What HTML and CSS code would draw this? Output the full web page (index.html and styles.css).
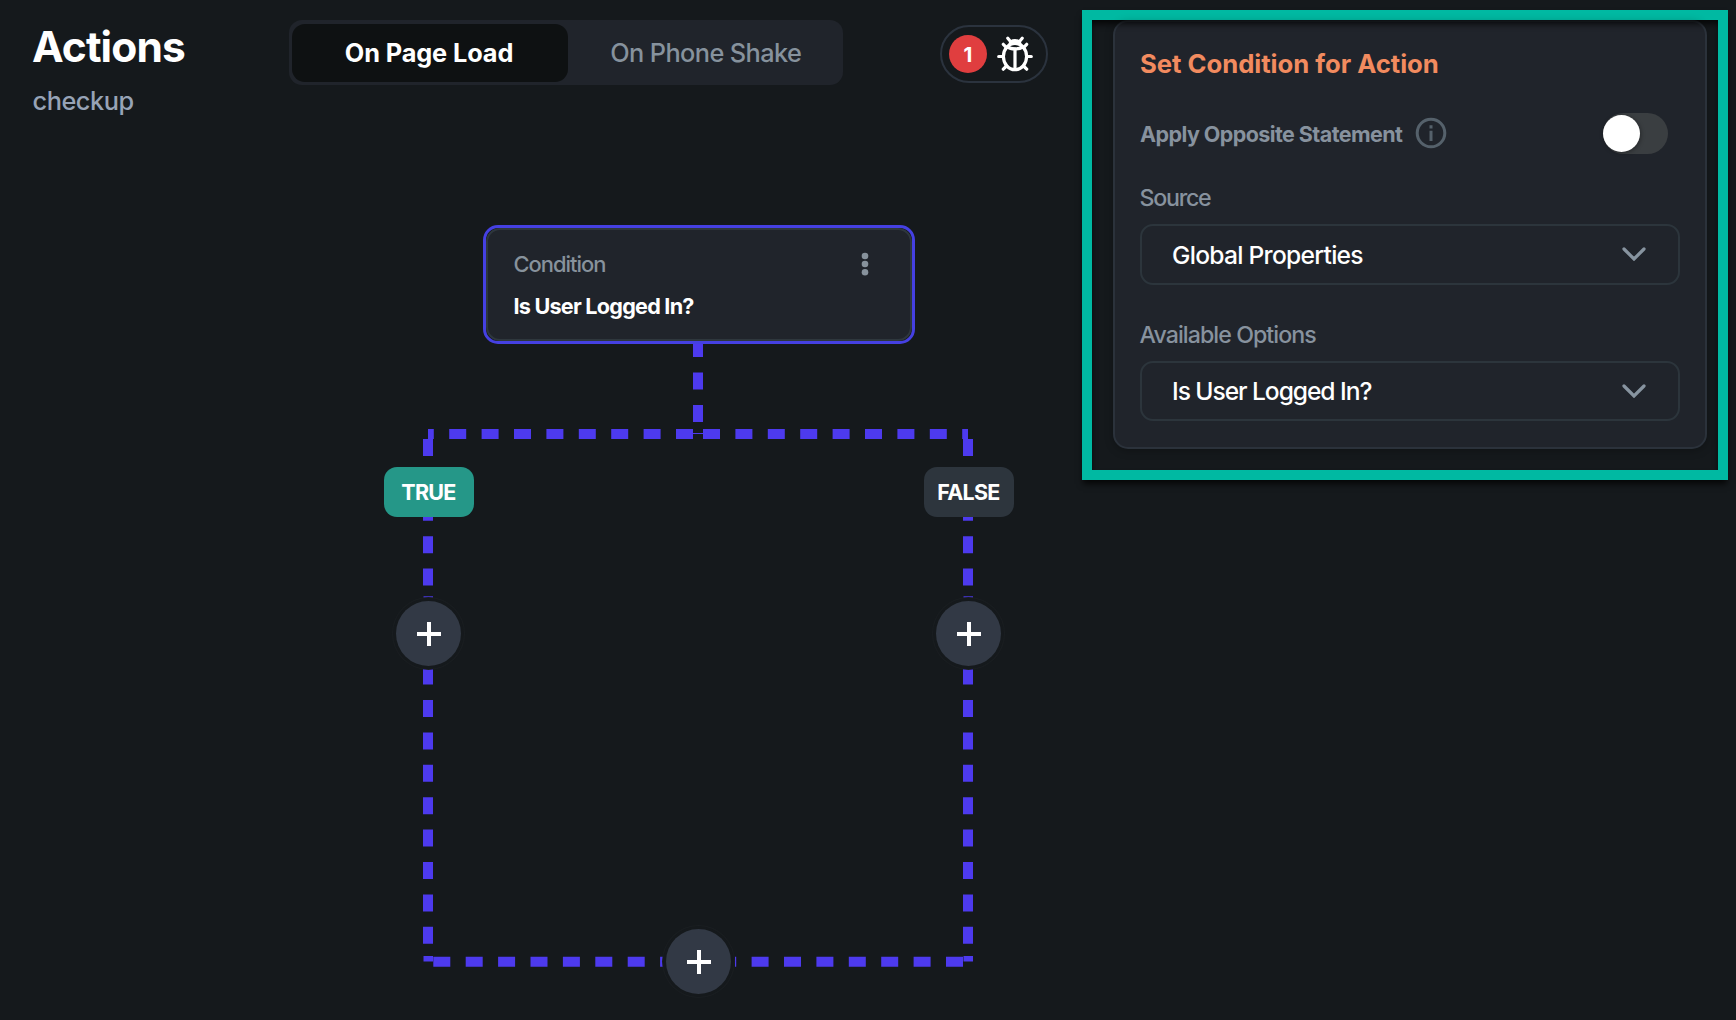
FILE: index.html
```html
<!DOCTYPE html>
<html lang="en">
<head>
<meta charset="utf-8">
<title>Actions</title>
<link rel="stylesheet" href="styles.css">
</head>
<body>
<div class="app">
  <main class="workspace">
    <header class="topbar">
      <div class="heading">
        <h1 class="page-title">Actions</h1>
        <p class="page-name">checkup</p>
      </div>
      <nav class="tabs">
        <button class="tab tab-active">On Page Load</button>
        <button class="tab">On Phone Shake</button>
      </nav>
      <button class="issues" aria-label="Issues">
        <span class="issue-count">1</span>
        <svg class="bug" viewBox="0 0 36 36" fill="none" stroke="#fff" stroke-width="3.2" stroke-linecap="round">
          <ellipse cx="18" cy="20.5" rx="11.6" ry="13.2"/>
          <path d="M18 12.5V33.5M11 11C13.5 13.5 22.5 13.5 25 11M12.8 8.6C13.5 5.5 15.5 4.6 18 4.6S22.5 5.5 23.2 8.6M10.8 2.3L13.3 5.2M25.2 2.3L22.7 5.2M1.7 20.5H6M30 20.5H34.3M6.3 8.3L9.5 11.6M29.7 8.3L26.5 11.6M6.3 33.2L9.5 30M29.7 33.2L26.5 30"/>
        </svg>
      </button>
    </header>

    <section class="canvas">
      <svg class="wires" viewBox="0 140 1082 880" fill="#4d3aee">
        <g class="dashes">
          <path d="M698 340V357"/>
          <path d="M698 372.5V434"/>
          <path d="M693 434H428"/>
          <path d="M703 434H968"/>
          <path d="M428 439V585.5"/>
          <path d="M968 439V585.5"/>
          <path d="M428 667.6V944"/>
          <path d="M968 667.6V944"/>
          <path d="M433.3 961.7H663"/>
          <path d="M963 961.7H735"/>
        </g>
        <path d="M693 433h10v1h-10z"/>
        <path d="M423.5 596h9.5v2h-9.5zM963.5 596h9.5v2h-9.5z" opacity=".7"/>
        <path d="M423.5 956h9.5v5.5h-9.5zM963.5 956h9.5v5.5h-9.5z"/>
      </svg>

      <article class="node">
        <div class="node-body">
          <div class="node-head">
            <span class="node-kind">Condition</span>
            <svg class="dots" viewBox="0 0 8 24" fill="#87929c"><circle cx="4" cy="4" r="3.3"/><circle cx="4" cy="12" r="3.3"/><circle cx="4" cy="20.2" r="3.3"/></svg>
          </div>
          <div class="node-name">Is User Logged In?</div>
        </div>
      </article>

      <span class="branch branch-true">TRUE</span>
      <span class="branch branch-false">FALSE</span>

      <button class="add add-true" aria-label="Add action"><svg viewBox="0 0 26 26"><path d="M1 13H25M13 1V25"/></svg></button>
      <button class="add add-false" aria-label="Add action"><svg viewBox="0 0 26 26"><path d="M1 13H25M13 1V25"/></svg></button>
      <button class="add add-end" aria-label="Add action"><svg viewBox="0 0 26 26"><path d="M1 13H25M13 1V25"/></svg></button>
    </section>
  </main>

  <aside class="highlight">
    <section class="panel">
      <h2 class="panel-title">Set Condition for Action</h2>
      <div class="toggle-row">
        <span class="toggle-label">Apply Opposite Statement</span>
        <svg class="info" viewBox="0 0 32 32" fill="none" stroke="#55616b" stroke-width="3"><circle cx="16" cy="16" r="13.8"/><path d="M16 13.8V24M16 8.3V11.5"/></svg>
        <span class="switch"><span class="knob"></span></span>
      </div>
      <div class="label">Source</div>
      <div class="select">
        <span class="select-global">Global Properties</span>
        <svg class="chevron" viewBox="0 0 24 14"><path d="M2 2L12 12L22 2"/></svg>
      </div>
      <div class="label label-options">Available Options</div>
      <div class="select select-short">
        <span class="select-user">Is User Logged In?</span>
        <svg class="chevron" viewBox="0 0 24 14"><path d="M2 2L12 12L22 2"/></svg>
      </div>
    </section>
  </aside>
</div>
</body>
</html>
```
FILE: styles.css
```css
* { box-sizing: border-box; }

body {
  margin: 0;
  background: #15191c;
  color: #fff;
  font-family: Inter, "Liberation Sans", sans-serif;
}

h1, h2, p { margin: 0; }

button {
  border: 0;
  padding: 0;
  background: none;
  color: inherit;
  font: inherit;
}

.app {
  display: grid;
  grid-template-columns: 1082px 646px;
  height: 1020px;
  overflow: hidden;
}

/* Top bar */
.workspace {
  display: grid;
  grid-template-rows: 140px 880px;
}

.topbar {
  display: flex;
  align-items: flex-start;
  padding: 20px 34px 0 32px;
}

.heading { width: 256.5px; }

.page-title {
  font-size: 42.5px;
  line-height: 53px;
  font-weight: 700;
  letter-spacing: -0.9px;
}

.page-name {
  margin: 11.5px 0 0 0.5px;
  font-size: 25.3px;
  line-height: 32px;
  font-weight: 500;
  letter-spacing: -0.45px;
  color: #97a3b6;
}

.tabs {
  display: flex;
  width: 554.5px;
  height: 65px;
  padding: 3.5px;
  border-radius: 13px;
  background: #20242b;
}

.tab {
  width: 272px;
  height: 58px;
  border-radius: 13px;
  font-size: 25.3px;
  font-weight: 500;
  letter-spacing: -0.6px;
  color: #86929d;
}

.tab + .tab { padding-left: 4px; }

.tab-active {
  flex: none;
  width: 276px;
  padding-right: 2px;
  background: #0e1112;
  color: #fff;
  font-weight: 700;
  letter-spacing: -0.1px;
}

.issues {
  display: flex;
  align-items: center;
  gap: 10px;
  width: 108px;
  height: 58px;
  margin: 5px 0 0 auto;
  padding: 0 7px;
  border: 2px solid #2b333e;
  border-radius: 29px;
}

.issue-count {
  width: 38px;
  height: 38px;
  border-radius: 50%;
  background: #e03e3f;
  font-size: 20.5px;
  line-height: 39px;
  font-weight: 700;
  text-align: center;
}

.bug { width: 36px; height: 36px; }

/* Flow canvas */
.canvas { position: relative; }

.wires {
  display: block;
  width: 1082px;
  height: 880px;
}

.dashes {
  stroke: #4d3aee;
  stroke-width: 10;
  stroke-dasharray: 17 15.4;
}

.node {
  position: absolute;
  left: 483px;
  top: 85px;
  width: 432px;
  height: 119px;
  border: 3px solid #4540e2;
  border-radius: 15px;
  background: #15191c;
}

.node-body {
  height: 113px;
  padding: 20px 43px 0 25.5px;
  border: 2px solid #2e373d;
  border-radius: 14px;
  background: #20242b;
}

.node-head {
  display: flex;
  justify-content: space-between;
  align-items: center;
  height: 28px;
}

.node-kind {
  font-size: 21.9px;
  font-weight: 500;
  letter-spacing: -1px;
  color: #87929c;
}

.dots { width: 8px; height: 24px; margin-right: -2px; }

.node-name {
  margin-top: 13px;
  font-size: 21.6px;
  line-height: 30px;
  font-weight: 700;
  letter-spacing: -0.76px;
}

.branch {
  position: absolute;
  top: 326.5px;
  width: 90px;
  height: 50.5px;
  padding-right: 1px;
  border-radius: 13px;
  font-size: 21.5px;
  line-height: 50px;
  font-weight: 700;
  text-align: center;
  letter-spacing: -0.75px;
}

.branch-true { left: 384px; background: #259788; }
.branch-false { left: 924px; background: #2d353d; }

.add {
  position: absolute;
  display: grid;
  place-items: center;
  width: 65px;
  height: 65px;
  border-radius: 50%;
  background: #323945;
  box-shadow: 0 0 0 3px #15191c, 0 0 0 4px #1a1e21;
}

.add svg {
  width: 26px;
  height: 26px;
  stroke: #fff;
  stroke-width: 4;
}

.add-true { left: 396.4px; top: 461.4px; }
.add-false { left: 936.4px; top: 461.4px; }
.add-end { left: 666.4px; top: 789px; }

/* Highlighted settings panel */
.highlight {
  position: relative;
  height: 470px;
  margin-top: 10px;
  padding: 0 11px 0 21px;
  border: 10px solid #00b9a2;
  box-shadow: 0 5px 6px -1px rgba(0, 0, 0, .75);
}

.highlight::after {
  content: "";
  position: absolute;
  inset: 0;
  box-shadow: inset 0 5px 6px -1px rgba(0, 0, 0, .75);
}

.panel {
  height: 428.5px;
  padding: 26px 25px 0;
  border: 2px solid #2b323b;
  border-radius: 15px;
  background: #20242b;
  box-shadow: 0 2px 8px rgba(0, 0, 0, .25);
}

.panel-title {
  font-size: 25.7px;
  line-height: 32px;
  font-weight: 700;
  letter-spacing: -0.03px;
  color: #f28b5f;
}

.toggle-row {
  display: flex;
  align-items: center;
  height: 41px;
  margin-top: 33px;
  padding-right: 12px;
}

.toggle-label {
  font-size: 21.5px;
  font-weight: 700;
  letter-spacing: -0.58px;
  color: #87929e;
}

.info { width: 32px; height: 32px; margin: -1px 0 0 13px; }

.switch {
  width: 65px;
  height: 41px;
  margin-left: auto;
  padding: 2px 0 0;
  border-radius: 21px;
  background: #3a3e41;
}

.knob {
  display: block;
  width: 37px;
  height: 37px;
  border-radius: 50%;
  background: #fff;
  box-shadow: 1px 1px 4px rgba(0, 0, 0, .35);
}

.label {
  margin: 30px 0 12px -0.5px;
  font-size: 23.2px;
  line-height: 28px;
  font-weight: 500;
  letter-spacing: -1.25px;
  color: #87929e;
}

.label-options { margin-top: 36px; letter-spacing: -0.94px; }

.select {
  display: flex;
  justify-content: space-between;
  align-items: center;
  height: 61px;
  padding: 0 32px 0 30px;
  border: 2px solid #2c353c;
  border-radius: 13px;
  font-size: 24.6px;
  line-height: 30px;
  font-weight: 500;
}

.select-short { height: 60px; }
.select-global { letter-spacing: -0.72px; }
.select-user { letter-spacing: -1.06px; }

.chevron {
  width: 24px;
  height: 14px;
  margin-top: -1px;
  fill: none;
  stroke: #8794a0;
  stroke-width: 3.2;
  stroke-linecap: round;
}
```
